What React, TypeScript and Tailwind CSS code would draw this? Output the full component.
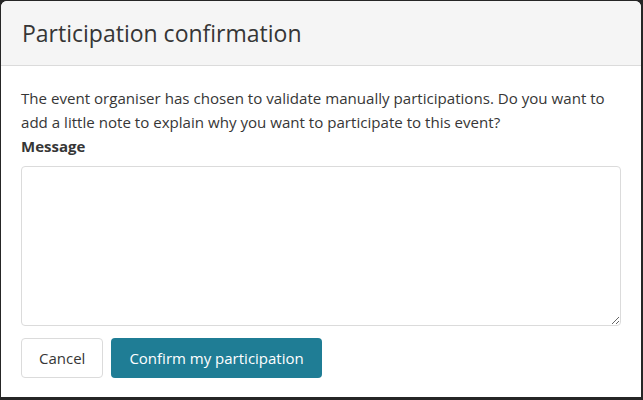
export default function App() {
  return (
    <div className="w-[643px] h-[400px] bg-[#262626] p-[1px] pr-[2px] pb-[3px] pl-[1px]" style={{ fontFamily: '"Open Sans", sans-serif' }}>
      <div className="flex flex-col h-full rounded-t-[6px] overflow-hidden bg-white">
        <header className="h-[65px] shrink-0 bg-[#f5f5f5] border-b border-[#dbdbdb] flex items-center px-[21px]">
          <h1 className="text-[23px] text-[#363636] leading-none">Participation confirmation</h1>
        </header>
        <section className="px-[20px] pt-[20px] text-[#363636]">
          <p className="text-[15.1px] leading-[24px]">
            The event organiser has chosen to validate manually participations. Do you want to add a little note to explain why you want to participate to this event?
          </p>
          <label className="block text-[15px] font-bold leading-[24px]">Message</label>
          <textarea className="mt-[8px] block w-[600px] h-[160px] border border-[#dbdbdb] rounded-[4px] resize-y" />
          <div className="flex gap-[8px] mt-[12px]">
            <button className="h-[40px] px-[17px] border border-[#dbdbdb] rounded-[4px] bg-white text-[15px] text-[#363636]">Cancel</button>
            <button className="h-[40px] px-[18px] rounded-[4px] bg-[#1f7d95] text-[15px] text-white">Confirm my participation</button>
          </div>
        </section>
      </div>
    </div>
  );
}
